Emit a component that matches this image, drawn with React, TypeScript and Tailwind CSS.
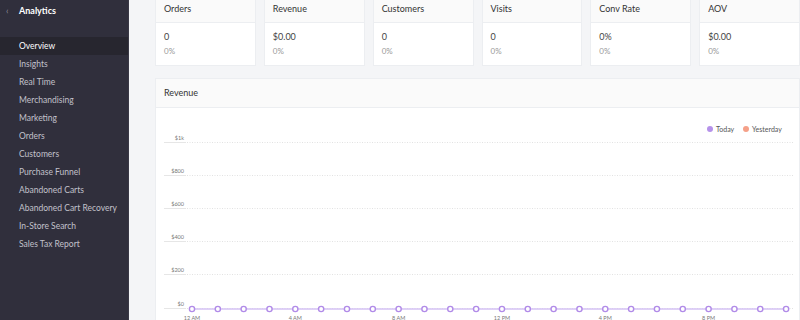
import React from "react";

const navItems = [
  "Overview",
  "Insights",
  "Real Time",
  "Merchandising",
  "Marketing",
  "Orders",
  "Customers",
  "Purchase Funnel",
  "Abandoned Carts",
  "Abandoned Cart Recovery",
  "In-Store Search",
  "Sales Tax Report",
];

const stats = [
  { label: "Orders", value: "0" },
  { label: "Revenue", value: "$0.00" },
  { label: "Customers", value: "0" },
  { label: "Visits", value: "0" },
  { label: "Conv Rate", value: "0%" },
  { label: "AOV", value: "$0.00" },
];

function Chart() {
  const ox = 155;
  const oy = 107;
  const yLabels = [
    { t: "$1k", y: 141 },
    { t: "$800", y: 174 },
    { t: "$600", y: 207 },
    { t: "$400", y: 240 },
    { t: "$200", y: 273 },
    { t: "$0", y: 307 },
  ];
  const points = Array.from({ length: 24 }, (_, i) => 191 + i * 25.83);
  const xLabels = [
    { t: "12 AM", i: 0 },
    { t: "4 AM", i: 4 },
    { t: "8 AM", i: 8 },
    { t: "12 PM", i: 12 },
    { t: "4 PM", i: 16 },
    { t: "8 PM", i: 20 },
  ];
  return (
    <svg width="643" height="220" className="block" style={{ fontFamily: "Lato, 'Liberation Sans', sans-serif" }}>
      <circle cx={709 - ox} cy={128 - oy} r="3" fill="#b592ea" />
      <text x={715 - ox} y={131 - oy} fontSize="7" fill="#555">Today</text>
      <circle cx={745 - ox} cy={128 - oy} r="3" fill="#f5a088" />
      <text x={751 - ox} y={131 - oy} fontSize="7" fill="#555">Yesterday</text>
      {yLabels.map((l) => (
        <g key={l.t}>
          <text x={183 - ox} y={l.y - oy - 2} fontSize="5.5" fill="#777" textAnchor="end">{l.t}</text>
          <line x1={163 - ox} x2={185 - ox} y1={l.y - oy + 0.5} y2={l.y - oy + 0.5} stroke="#e6e6e6" strokeWidth="1" />
          <line x1={186 - ox} x2={792 - ox} y1={l.y - oy + 0.5} y2={l.y - oy + 0.5} stroke="#e2e2e2" strokeWidth="1" strokeDasharray="1 1.5" />
        </g>
      ))}
      <line x1={points[0] - ox} x2={points[23] - ox} y1={308 - oy} y2={308 - oy} stroke="#d5c2f4" strokeWidth="1.5" />
      {points.map((p, i) => (
        <circle key={i} cx={p - ox} cy={308 - oy} r="2.6" fill="#fff" stroke="#b18be8" strokeWidth="1.4" />
      ))}
      {xLabels.map((l) => (
        <text key={l.t} x={points[l.i] - ox} y={318.5 - oy} fontSize="5.5" fill="#777" textAnchor="middle">{l.t}</text>
      ))}
    </svg>
  );
}

export default function App() {
  return (
    <div
      className="flex w-[800px] h-[320px] overflow-hidden bg-[#f4f5f7]"
      style={{ fontFamily: "Lato, 'Liberation Sans', sans-serif" }}
    >
      <aside className="w-[129px] shrink-0 bg-[#302f3c] flex flex-col border-r border-[#3a3946]">
        <div className="flex items-center h-[22px] pl-[6px] text-white">
          <span className="text-[9px] text-[#8f8e99] w-[13px]">‹</span>
          <span className="text-[9px] font-bold">Analytics</span>
        </div>
        <div className="h-[15px]" />
        {navItems.map((item, i) => (
          <div
            key={item}
            className={`h-[18px] flex items-center pl-[19px] text-[8.5px] ${
              i === 0 ? "bg-[#27262f] text-white" : "text-[#c2c1cb]"
            }`}
          >
            {item}
          </div>
        ))}
      </aside>
      <main className="flex-1 pl-[26px] pr-[2px] flex flex-col">
        <div className="grid grid-cols-6 gap-[8px] -mt-[6px]">
          {stats.map((s) => (
            <div key={s.label} className="bg-white border border-[#eceef1] flex flex-col h-[72px]">
              <div className="h-[28px] bg-[#fafafa] border-b border-[#eceef1] flex items-end pb-[7px] pl-[8px] text-[9px] text-[#333]">
                {s.label}
              </div>
              <div className="pl-[8px] pt-[8px] text-[9px] text-[#444] leading-[12px]">{s.value}</div>
              <div className="pl-[8px] pt-[2px] text-[8px] text-[#999] leading-[12px]">0%</div>
            </div>
          ))}
        </div>
        <div className="mt-[12px] bg-white border border-[#eceef1] flex-1 flex flex-col">
          <div className="h-[29px] bg-[#fafafa] border-b border-[#eceef1] flex items-center pl-[8px] text-[9px] text-[#333]">
            Revenue
          </div>
          <Chart />
        </div>
      </main>
    </div>
  );
}
